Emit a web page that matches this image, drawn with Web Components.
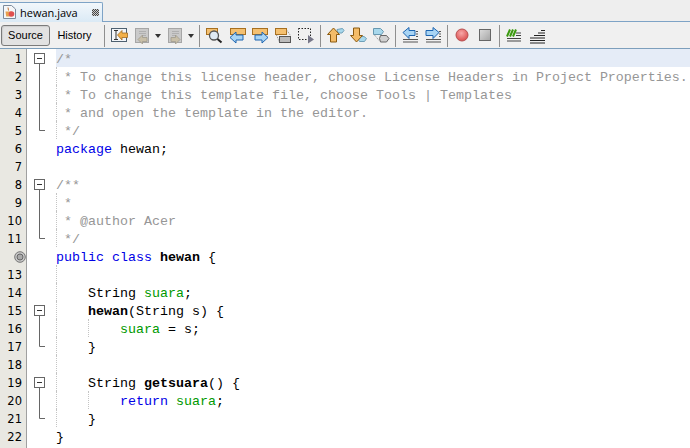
<!DOCTYPE html>
<html><head><meta charset="utf-8">
<style>
html,body{margin:0;padding:0;background:#fff;overflow:hidden}
body{width:690px;height:448px;font-family:"DejaVu Sans",sans-serif}
</style></head><body>
<editor-view>
  <doc-tab slot="tab" label="hewan.java"></doc-tab>
  <view-switch slot="tools" label="Source" active></view-switch>
  <view-switch slot="tools" label="History"></view-switch>
  <tool-sep slot="tools" style="margin-left:3px"></tool-sep>
  <tool-btn slot="tools" icon="last"></tool-btn>
  <tool-btn slot="tools" icon="bprev"></tool-btn><tool-drop slot="tools"></tool-drop>
  <tool-btn slot="tools" icon="bnext"></tool-btn><tool-drop slot="tools"></tool-drop>
  <tool-sep slot="tools"></tool-sep>
  <tool-btn slot="tools" icon="find"></tool-btn>
  <tool-btn slot="tools" icon="fprev"></tool-btn>
  <tool-btn slot="tools" icon="fnext"></tool-btn>
  <tool-btn slot="tools" icon="toggle"></tool-btn>
  <tool-btn slot="tools" icon="rect"></tool-btn>
  <tool-sep slot="tools"></tool-sep>
  <tool-btn slot="tools" icon="up"></tool-btn>
  <tool-btn slot="tools" icon="down"></tool-btn>
  <tool-btn slot="tools" icon="hex"></tool-btn>
  <tool-sep slot="tools"></tool-sep>
  <tool-btn slot="tools" icon="sl"></tool-btn>
  <tool-btn slot="tools" icon="sr"></tool-btn>
  <tool-sep slot="tools"></tool-sep>
  <tool-btn slot="tools" icon="rec"></tool-btn>
  <tool-btn slot="tools" icon="stop"></tool-btn>
  <tool-sep slot="tools"></tool-sep>
  <tool-btn slot="tools" icon="comment"></tool-btn>
  <tool-btn slot="tools" icon="stairs"></tool-btn>

  <code-line n="1" fold="start" current><span class="c">/*</span></code-line>
  <code-line n="2" fold="mid" guides="0"><span class="c"> * To change this license header, choose License Headers in Project Properties.</span></code-line>
  <code-line n="3" fold="mid" guides="0"><span class="c"> * To change this template file, choose Tools | Templates</span></code-line>
  <code-line n="4" fold="mid" guides="0"><span class="c"> * and open the template in the editor.</span></code-line>
  <code-line n="5" fold="end" guides="0"><span class="c"> */</span></code-line>
  <code-line n="6"><span class="k">package</span> hewan;</code-line>
  <code-line n="7"></code-line>
  <code-line n="8" fold="start"><span class="c">/**</span></code-line>
  <code-line n="9" fold="mid" guides="0"><span class="c"> *</span></code-line>
  <code-line n="10" fold="mid" guides="0"><span class="c"> * @author Acer</span></code-line>
  <code-line n="11" fold="end" guides="0"><span class="c"> */</span></code-line>
  <code-line mark><span class="k">public</span> <span class="k">class</span> <span class="b">hewan</span> {</code-line>
  <code-line n="13" guides="0"></code-line>
  <code-line n="14" guides="0">    String <span class="f">suara</span>;</code-line>
  <code-line n="15" fold="start" guides="0">    <span class="b">hewan</span>(String s) {</code-line>
  <code-line n="16" fold="mid" guides="0 32">        <span class="f">suara</span> = s;</code-line>
  <code-line n="17" fold="end" guides="0">    }</code-line>
  <code-line n="18" guides="0"></code-line>
  <code-line n="19" fold="start" guides="0">    String <span class="b">getsuara</span>() {</code-line>
  <code-line n="20" fold="mid" guides="0 32">        <span class="k">return</span> <span class="f">suara</span>;</code-line>
  <code-line n="21" fold="end" guides="0">    }</code-line>
  <code-line n="22">}</code-line>
</editor-view>
<script>
const ICONS={
last:`<rect x=".5" y="1.500" width="15" height="13" fill="#f2f5f8" stroke="#4e6070"/><path d="M3 3.500h4M3 12.500h4M5 3.500v9" fill="none" stroke="#333"/><path d="M6.500 8l4.500-4.500v2.500H16.500v4.500H11V13z" fill="#f2b048" stroke="#a06a20" stroke-width=".8"/>`,
bprev:`<rect x="1.500" y="1.500" width="13" height="14" fill="#cacaca" stroke="#a6a6a6"/><path d="M5 4.500h7M5 6.500h7M8 8.500h4" stroke="#b0b0b0"/><path d="M4 12.500l4.500-4.500v2.500H13v4H8.500V17z" fill="#c8bfa8" stroke="#a09a8c" stroke-width=".8"/>`,
bnext:`<rect x="1.500" y="1.500" width="13" height="14" fill="#cacaca" stroke="#a6a6a6"/><path d="M5 4.500h7M5 6.500h7M5 8.500h4" stroke="#b0b0b0"/><path d="M13 12.500L8.500 8v2.500H4v4h4.500V17z" fill="#c8bfa8" stroke="#a09a8c" stroke-width=".8"/>`,
find:`<rect x=".5" y="1.500" width="11" height="6" fill="#f4c070" stroke="#a87020"/><circle cx="8" cy="8.500" r="4.500" fill="#dfe9f2" stroke="#555" stroke-width="1.300"/><path d="M11.500 12l4 3.500" stroke="#222" stroke-width="2"/>`,
fprev:`<rect x="1.500" y="1.500" width="15" height="6" fill="#f4c070" stroke="#a87020"/><path d="M1 10.500l6-5.500v3h7v5H7v3z" fill="#a8d4f4" stroke="#1c64b0"/>`,
fnext:`<rect x=".5" y="1.500" width="15" height="6" fill="#f4c070" stroke="#a87020"/><path d="M16 10.500L10 5v3H3v5h7v3z" fill="#a8d4f4" stroke="#1c64b0"/>`,
toggle:`<rect x=".5" y="1.500" width="11" height="6" fill="#f4c070" stroke="#a87020"/><rect x="4.500" y="9.500" width="11" height="6" fill="#bbb" stroke="#555"/><path d="M1.500 8l3 7.500M12 3.500l3.500 5" stroke="#888" stroke-dasharray="1 1"/>`,
rect:`<rect x=".5" y="1.500" width="12" height="11" fill="none" stroke="#222" stroke-dasharray="1.500 1.500"/><path d="M10 8l6 4.500-6 4z" fill="#778"/>`,
up:`<path d="M10 2.500l5.500-1 1.500 2-2 2.500h-4z" fill="#a8d8ec" stroke="#70a0b8"/><path d="M6 1l6 6.500H9V15H3V7.500H0z" transform="translate(.5 0)" fill="#f4bc68" stroke="#8a5a10"/>`,
down:`<path d="M9 9.500h5l2.500 2-2 3h-5l-1.500-2.500z" fill="#a8d8ec" stroke="#70a0b8"/><path d="M6 15L0 8.500h3V1h6v7.500h3z" transform="translate(.5 0)" fill="#f4bc68" stroke="#8a5a10"/>`,
hex:`<path d="M.5 1.500h7l3 3-2 3h-8z" fill="#a8d8ec" stroke="#6898b0"/><path d="M7.500 8.500h6l2.500 3-2.500 3.500h-6l-1-3.500z" fill="#d0d0d0" stroke="#666"/><path d="M1.500 8l5 6" stroke="#888" stroke-dasharray="1 1"/>`,
sl:`<path d="M1 5.500l6-5v3h6v5H7v3z" fill="#a8d4f4" stroke="#1c64b0"/><path d="M14 4.500h2M14 7h2M14 9.500h2M1 12.500h15M1 15h15" stroke="#555"/>`,
sr:`<path d="M14 5.500l-6-5v3H1v5h7v3z" fill="#a8d4f4" stroke="#1c64b0"/><path d="M14 4.500h2M14 7h2M14 9.500h2M1 12.500h15M1 15h15" stroke="#555"/>`,
rec:`<defs><radialGradient id="r" cx=".45" cy=".35" r=".7"><stop offset="0" stop-color="#f8a8a8"/><stop offset="1" stop-color="#d84848"/></radialGradient></defs><circle cx="8" cy="8" r="6" fill="url(#r)" stroke="#b85050"/>`,
stop:`<defs><linearGradient id="g" x1="0" y1="0" x2="1" y2="1"><stop offset="0" stop-color="#ddd"/><stop offset="1" stop-color="#a4a4a4"/></linearGradient></defs><rect x="2.500" y="2.500" width="11" height="11" fill="url(#g)" stroke="#666"/>`,
comment:`<path d="M1 9.500l3-7M4 9.500l3-7M7 9.500l3-7" stroke="#3c9a10" stroke-width="2" fill="none"/><path d="M10 6h5M10 8.500h5M1 11.500h14M1 14h14" stroke="#444"/>`,
stairs:`<path d="M12 3.500h4M9 6h7M5 8.500h11M1 11h15M1 13.500h15M1 16h15" stroke="#222"/>`
};
const def=(n,css,html)=>customElements.define(n,class extends HTMLElement{
  connectedCallback(){ if(this.shadowRoot)return; const s=this.attachShadow({mode:'open'});
    s.innerHTML=`<style>${css}</style>`+(typeof html==='function'?html(this):html);}
});
def('editor-view',`
:host{display:flex;flex-direction:column;width:690px;height:448px;overflow:hidden;background:#fff}
.tabs{display:flex;height:22px;box-sizing:border-box;padding-top:2px;background:#eeeeee;border-bottom:1px solid #7ea3c6}
.bar{display:flex;align-items:center;height:27px;box-sizing:border-box;padding:2px 0 1px 1px;background:#f0f0f0;border-bottom:1px solid #7d9fbc}
.body{flex:1;display:flex;flex-direction:column;background:linear-gradient(90deg,#e9e8e2 26px,#a0a0a0 26px,#a0a0a0 27px,#fff 27px)}
`,`<div class="tabs"><slot name="tab"></slot></div><div class="bar"><slot name="tools"></slot></div><div class="body" part="body"><slot></slot></div>`);
def('doc-tab',`
:host{display:block;width:103px;box-sizing:border-box;border:1px solid #7ea3c6;border-bottom:none;border-left:none;border-radius:0 2px 0 0;background:linear-gradient(#f2f7fb,#d9e9f5);margin-bottom:-1px;height:21px}
.w{display:flex;align-items:center;height:100%;box-sizing:border-box;padding-bottom:2px;font:11px "Open Sans","DejaVu Sans",sans-serif;color:#000}
svg{display:block;margin:0 4px 0 3px;flex:none}
span{flex:1}
.x{flex:none;width:7px;height:7px;margin-right:3px;background:repeating-conic-gradient(#444 0 25%,#ccc 0 50%) 0 0/2px 2px}
`,h=>`<div class="w"><svg width="13" height="14" viewBox="0 0 13 14"><path d="M.5.500h8l4 3.500v9.500H.5z" fill="#f4f6f8" stroke="#7c8a9c"/><path d="M2.500 6.500h6l-.7 5h-4.600z" fill="#e8a050"/><path d="M5 2.500l.5 3" stroke="#c07030"/><circle cx="8.500" cy="9" r="2.800" fill="#e05050"/></svg><span>${h.getAttribute('label')}</span><div class="x"></div></div>`);
def('view-switch',`
:host{display:block;flex:none;width:49px;height:21px;box-sizing:border-box;text-align:center;font:11px/19px "Liberation Sans",sans-serif;color:#000;border:1px solid transparent;border-radius:3px}
:host([active]){background:#e2e2e2;border-color:#7b7b7b;box-shadow:inset 1px 1px 1px #cfcfcf}
`,h=>h.getAttribute('label'));
def('tool-sep',`
:host{display:block;flex:none;width:6px;height:22px}
i{display:block;width:1px;height:100%;margin-left:2px;background:#8f8f8f}
`,`<i></i>`);
def('tool-btn',`
:host{display:flex;flex:none;width:23px;height:20px;align-items:center;justify-content:center}
svg{display:block;overflow:visible}
`,h=>`<svg width="17" height="17" viewBox="0 0 17 17">${ICONS[h.getAttribute('icon')]}</svg>`);
def('tool-drop',`
:host{display:flex;flex:none;width:10px;height:20px;align-items:center;justify-content:flex-start}
i{display:block;margin-left:1px;border:3.500px solid transparent;border-top:4px solid #333;border-bottom:0}
`,`<i></i>`);
def('code-line',`
:host{display:flex;height:18px;position:relative;font:13.333px/21px "Liberation Mono",monospace;white-space:pre;color:#000}
:host([current]) .code{background:#e5ecf7}
.n{flex:none;width:22px;text-align:right;font:11.500px/21px "DejaVu Sans",sans-serif;color:#000;margin-right:5px;height:18px}
.fold{flex:none;width:29px;height:18px;display:block}
.code{flex:1;min-width:0;overflow:hidden;height:18px}
.g{position:absolute;top:0;bottom:0;width:0;border-left:1px dotted #c4c4c4}
.mark{position:absolute;left:14px;top:4px}
::slotted(.c){color:#969696}
::slotted(.k){color:#0000e6}
::slotted(.f){color:#009900}
::slotted(.b){font-weight:bold}
`,h=>{
  const n=h.getAttribute('n'),f=h.getAttribute('fold');
  const gs=(h.getAttribute('guides')||'').split(' ').filter(Boolean);
  let fold='';
  if(f==='start')fold='<rect x="7.500" y="4.500" width="10" height="10" fill="#fff" stroke="#666"/><path d="M10 9.500h5" stroke="#333"/><path d="M12.500 14.500V18" stroke="#666"/>';
  if(f==='mid')fold='<path d="M12.500 0V18" stroke="#666"/>';
  if(f==='end')fold='<path d="M12.500 0V9.500H18" stroke="#666" fill="none"/>';
  const mark=h.hasAttribute('mark')?'<svg class="mark" width="12" height="12" viewBox="0 0 12 12"><circle cx="6" cy="6" r="5.300" fill="#c8c8c8" stroke="#777"/><circle cx="6" cy="6" r="3" fill="#aaa" stroke="#666"/></svg>':'';
  return `<div class="n">${n||''}</div><svg class="fold" width="29" height="18" viewBox="0 0 29 18">${fold}</svg><div class="code"><slot></slot></div>${mark}${gs.map(g=>`<i class="g" style="left:${56+ +g}px"></i>`).join('')}`;
});
</script>
</body></html>
